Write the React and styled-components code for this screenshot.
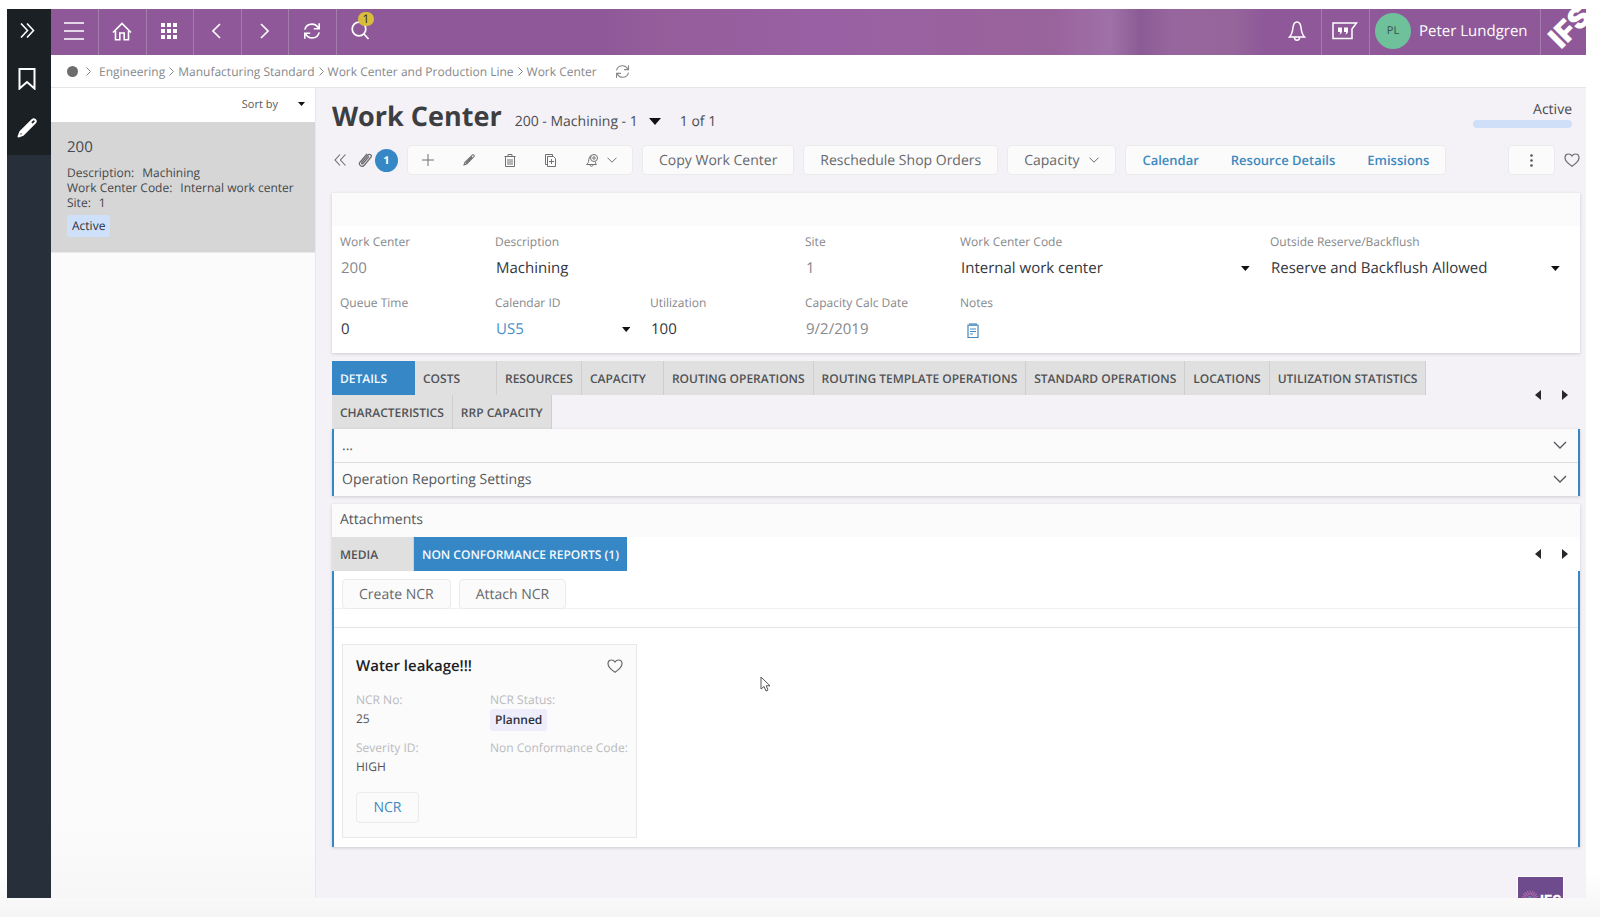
import React from "react";
import styled, { createGlobalStyle, css } from "styled-components";

const c = {
  purple: "#8f5999",
  purpleLine: "#a67bae",
  blue: "#3587c5",
  link: "#3d8abf",
  ink: "#3c3e42",
  text: "#55585c",
  label: "#86888b",
  faint: "#b9babd",
  panel: "#fbfbfb",
  canvas: "#f4f2f6",
  line: "#ebebed",
};

const GlobalStyle = createGlobalStyle`
  * { box-sizing: border-box; }
  body {
    margin: 0;
    font-family: "Open Sans", "Noto Sans", sans-serif;
    font-size: 12px;
    text-rendering: geometricPrecision;
    color: ${c.text};
    background: #fff;
  }
  button, select, input { font: inherit; color: inherit; text-rendering: inherit; }
  button { cursor: pointer; }
  h1, h2, h3, p, dl, dd, ul, ol { margin: 0; padding: 0; font-weight: inherit; }
  a { text-decoration: none; color: inherit; }
`;

const Page = styled.div`
  display: flex;
  height: 100vh;
  min-height: 880px;
  padding: 9px 14px 19px 7px;
  background: linear-gradient(#fff 95%, #f5f5f5);
`;
const Rail = styled.nav`
  flex: 0 0 44px;
  background: #27303a;
`;
const RailTop = styled.div`
  display: flex;
  flex-direction: column;
  align-items: center;
  gap: 17px;
  height: 146px;
  padding: 5px 4px 0 0;
  background: #1b2024;
`;
const RailButton = styled.button`
  display: flex;
  align-items: center;
  justify-content: center;
  width: 32px;
  height: 32px;
  padding: 0;
  border: 0;
  background: none;
  color: #fff;
`;
const Shell = styled.div`
  flex: 1;
  min-width: 0;
  display: flex;
  flex-direction: column;
`;
const TopBar = styled.header`
  display: flex;
  flex: 0 0 46px;
  overflow: hidden;
  color: #fff;
  background: linear-gradient(90deg, ${c.purple} 36%, #955d9a 40%, #9961a3 50%, #99639c 65%, #a070a8 69%, #8b5b95 71%, #98669e 73%, #96659b 77%, ${c.purple} 79%);
`;
const BarButton = styled.button`
  position: relative;
  display: flex;
  align-items: center;
  justify-content: center;
  width: ${(p) => (p.$wide ? 48 : 47)}px;
  padding: 0 2px 2px 0;
  border: 0;
  border-right: ${(p) => (p.$last ? "0" : `1px solid ${c.purpleLine}`)};
  background: none;
  color: #fff;
`;
const Spacer = styled.div`
  flex: 1;
`;
const SearchCount = styled.span`
  position: absolute;
  top: 3px;
  right: 10px;
  width: 16px;
  height: 14px;
  border-radius: 7px;
  background: #d9bd3a;
  color: #2c2530;
  font-size: 12px;
  line-height: 14px;
`;
const User = styled.button`
  display: flex;
  align-items: center;
  gap: 8px;
  width: 171px;
  padding: 0 0 2px 5px;
  border: 0;
  border-right: 1px solid ${c.purpleLine};
  background: none;
  font-size: 15px;
  color: #fff;
`;
const Avatar = styled.span`
  width: 36px;
  height: 36px;
  border-radius: 50%;
  background: #6fc19c;
  color: #35504a;
  font-size: 11px;
  line-height: 36px;
  text-align: center;
`;
const Brand = styled.div`
  display: flex;
  width: 45px;
  overflow: hidden;
`;

const Crumbs = styled.nav`
  display: flex;
  align-items: center;
  flex: 0 0 33px;
  gap: 4px;
  padding: 0 16px;
  border-bottom: 1px solid #e6e4e8;
  background: #fff;
  color: ${c.label};
  font-size: 12px;
`;
const Home = styled.span`
  display: flex;
  align-items: center;
  gap: 8px;
  margin-right: 4px;
`;
const Dot = styled.span`
  width: 11px;
  height: 11px;
  border-radius: 50%;
  background: #6d6d6d;
`;
const CrumbRefresh = styled.button`
  display: flex;
  margin-left: 14px;
  padding: 0;
  border: 0;
  background: none;
`;

const Body = styled.div`
  display: flex;
  flex: 1;
  min-height: 0;
`;
const ListPanel = styled.aside`
  flex: 0 0 265px;
  border-right: 1px solid #e8e8ec;
  background: linear-gradient(${c.panel} 90%, #f7f7f8);
`;
const SortRow = styled.button`
  display: flex;
  align-items: center;
  justify-content: flex-end;
  gap: 20px;
  width: 100%;
  height: 34px;
  padding: 0 10px 2px;
  border: 0;
  background: #fff;
  font-size: 11px;
`;
const ListItem = styled.article`
  height: 131px;
  padding: 14px 16px;
  border-bottom: 1px solid #e9e9e9;
  background: #d6d6d6;
  color: #44474b;
  line-height: 15px;
`;
const ItemTitle = styled.h2`
  margin-bottom: 7px;
  font-size: 15px;
  line-height: 22px;
`;
const ItemLine = styled.p`
  display: flex;
  gap: 8px;
`;
const Badge = styled.span`
  display: inline-block;
  padding: 0 5px;
  border-radius: 3px;
  background: ${(p) => p.$tone};
  color: #2b3038;
  font-weight: 600;
  line-height: 22px;
`;
const ItemBadge = styled(Badge)`
  margin-top: 5px;
  font-weight: 500;
`;

const Main = styled.main`
  flex: 1;
  min-width: 0;
  display: flex;
  flex-direction: column;
  overflow: hidden;
  padding: 0 6px 0 16px;
  background: ${c.canvas};
`;
const TitleRow = styled.div`
  display: flex;
  align-items: baseline;
  height: 57px;
  padding-top: 8px;
  color: #4b4d51;
  font-size: 14px;
`;
const Title = styled.h1`
  margin-right: 13px;
  color: ${c.ink};
  font-size: 27px;
  font-weight: 700;
  line-height: 40px;
`;
const RecordPicker = styled.button`
  display: flex;
  align-items: center;
  gap: 11px;
  margin-right: 19px;
  padding: 0;
  border: 0;
  background: none;
`;
const Status = styled.div`
  align-self: flex-start;
  width: 99px;
  margin: 4px 8px 0 auto;
  color: #4a4c50;
  text-align: right;
  line-height: 20px;
`;
const StatusBar = styled.div`
  height: 8px;
  border-radius: 4px;
  background: #cfdff7;
`;

const Toolbar = styled.div`
  display: flex;
  align-items: center;
  gap: 9px;
  height: 30px;
  margin-bottom: 18px;
`;
const AttachTools = styled.div`
  display: flex;
  align-items: center;
  gap: 12px;
  width: 66px;
  padding-left: 2px;
`;
const IconButton = styled.button`
  display: flex;
  padding: 0;
  border: 0;
  background: none;
  color: #6a6a6c;
`;
const AttachButton = styled(IconButton)`
  align-items: center;
  gap: 2px;
`;
const Count = styled.span`
  width: 23px;
  height: 23px;
  border-radius: 50%;
  background: ${c.blue};
  color: #fff;
  font-size: 11px;
  font-weight: 700;
  line-height: 23px;
  text-align: center;
`;
const Group = styled.div`
  display: flex;
  height: 30px;
  border: 1px solid ${c.line};
  border-radius: 4px;
  background: ${c.panel};
  overflow: hidden;

  > * + * { border-left: 1px solid ${c.line}; }
`;
const groupItem = css`
  display: flex;
  align-items: center;
  justify-content: center;
  padding: 0;
  border: 0;
  background: none;
`;
const GroupButton = styled.button`
  ${groupItem}
  gap: 9px;
  width: ${(p) => (p.$wide ? 60 : 41)}px;
  padding-right: 2px;
  color: #6f7073;
`;
const GroupLink = styled.a`
  ${groupItem}
  padding: 0 16px;
  color: ${c.link};
  font-size: 13px;
  font-weight: 600;
`;
const Button = styled.button`
  display: flex;
  align-items: center;
  justify-content: center;
  gap: 10px;
  height: 30px;
  padding: 0 16px;
  border: 1px solid ${c.line};
  border-radius: 4px;
  background: ${c.panel};
  color: #66686c;
  font-size: 14px;
`;
const MoreButton = styled(Button)`
  width: 47px;
  margin-left: auto;
`;

const Card = styled.section`
  background: #fff;
  box-shadow: 0 1px 3px rgba(70, 70, 80, 0.22);
`;
const CardBand = styled.div`
  height: 33px;
  padding: 0 8px;
  background: ${c.panel};
`;
const Fields = styled.div`
  display: grid;
  grid-template-columns: repeat(8, 1fr);
  padding: 6px 0 2px 8px;
`;
const Field = styled.div`
  display: flex;
  flex-direction: column;
  grid-column: span ${(p) => p.$span || 1};
  height: ${(p) => (p.$short ? 58 : 61)}px;
  padding-right: 20px;
`;
const FieldLabel = styled.label`
  color: ${c.label};
  line-height: 20px;
`;
const fieldValue = css`
  width: 100%;
  height: 32px;
  padding: 0 1px;
  border: 0;
  outline: 0;
  background: none;
  color: ${(p) => (p.$muted ? "#86888b" : p.$link ? "#4a90c6" : "#33363b")};
  font-size: 15px;
`;
const TextValue = styled.input`
  ${fieldValue}
`;
const SelectWrap = styled.span`
  display: flex;
  align-items: center;
`;
const SelectValue = styled.select`
  ${fieldValue}
  appearance: none;
`;
const NotesButton = styled(IconButton)`
  align-items: center;
  height: 34px;
  padding-left: 7px;
  color: #4488bd;
`;

const TabStrip = styled.div`
  display: flex;
  align-items: center;
  justify-content: space-between;
  margin-top: ${(p) => p.$gap || 0}px;
`;
const Tabs = styled.div`
  display: flex;
  flex-wrap: wrap;
`;
const Tab = styled.button`
  min-width: ${(p) => (p.$active ? 83 : 82)}px;
  height: 34px;
  padding: 0 8px;
  border: 0;
  border-right: ${(p) => (p.$active ? "0" : "1px solid #cfcfd1")};
  background: ${(p) => (p.$active ? c.blue : "#e0e0e0")};
  color: ${(p) => (p.$active ? "#f4faff" : "#505256")};
  font-size: 12px;
  font-weight: 600;
  text-align: left;
  white-space: nowrap;
`;
const Pager = styled.div`
  display: flex;
  flex: 0 0 68px;
  gap: 21px;
  padding-left: 23px;
`;
const Framed = styled.div`
  border: solid ${c.blue};
  border-width: 0 2px;
`;
const FoldCard = styled(Card)`
  margin-bottom: 8px;
`;
const Fold = styled.button`
  display: flex;
  align-items: center;
  justify-content: space-between;
  width: 100%;
  height: ${(p) => (p.$first ? 34 : 33)}px;
  padding: 0 11px 1px 8px;
  border: 0;
  border-bottom: ${(p) => (p.$first ? "1px solid #dcdcde" : "0")};
  background: ${c.panel};
  color: #54585c;
  font-size: 14px;
  font-weight: 500;
`;
const SectionTitle = styled.h2`
  font-size: 14px;
  font-weight: 500;
  line-height: 32px;
`;
const Actions = styled.div`
  display: flex;
  gap: 8px;
  height: 38px;
  margin-bottom: 18px;
  padding: 8px 8px 0;
  border-bottom: 1px solid #f1f1f2;
`;
const CardArea = styled.div`
  position: relative;
  padding: 16px 8px 9px;
  border-top: 1px solid #e4e4e6;
`;
const Report = styled.article`
  width: 295px;
  height: 194px;
  padding: 10px 13px;
  border: 1px solid #e8e8ea;
  background: ${c.panel};
`;
const ReportHead = styled.div`
  display: flex;
  align-items: center;
  justify-content: space-between;
  height: 22px;
  margin-bottom: 14px;
`;
const ReportTitle = styled.h3`
  color: #1d2025;
  font-size: 15px;
  font-weight: 600;
`;
const ReportData = styled.dl`
  display: grid;
  grid-template-columns: 134px 1fr;
  grid-auto-rows: 48px;
  height: 101px;
`;
const Term = styled.dt`
  color: ${c.faint};
  line-height: 18px;
  white-space: nowrap;
`;
const Detail = styled.dd`
  color: #505357;
  line-height: 20px;
`;
const ReportLink = styled.a`
  display: inline-flex;
  align-items: center;
  justify-content: center;
  width: 63px;
  height: 31px;
  border: 1px solid ${c.line};
  border-radius: 4px;
  color: ${c.link};
  font-size: 14px;
  font-weight: 500;
`;
const Pointer = styled.svg`
  position: absolute;
  left: 426px;
  top: 48px;
`;
const FooterLogo = styled.div`
  flex: 0 0 21px;
  width: 45px;
  margin: auto 17px 0 auto;
  overflow: hidden;
  background: #6e4b8c;
  outline: 1px solid #fff;
`;

const Svg = ({ w = 20, h = w, box = `0 0 ${w} ${h}`, sw = 2, children, ...rest }) => (
  <svg width={w} height={h} viewBox={box} fill="none" stroke="currentColor" strokeWidth={sw} aria-hidden="true" {...rest}>
    {children}
  </svg>
);
const Caret = ({ w = 8, h = 5 }) => (
  <Svg w={w} h={h} box="0 0 10 6" sw={0} preserveAspectRatio="none">
    <path d="M0 0H10L5 6Z" fill="#111" />
  </Svg>
);
const SideCaret = ({ right }) => (
  <Svg w={6} h={10} sw={0}>
    <path d={right ? "M0 0L6 5L0 10Z" : "M6 0L0 5L6 10Z"} fill="#26282b" />
  </Svg>
);
const Chevron = ({ w = 10, h = 6, sw = 1 }) => (
  <Svg w={w} h={h} box="0 0 10 6" sw={sw}>
    <path d="M0.5 0.7L5 5.2L9.5 0.7" />
  </Svg>
);
const Heart = () => (
  <Svg w={16} h={14} sw={1.2}>
    <path d="M8 13.2C5.5 11.6 1 8.6 1 4.8C1 2.6 2.5 1 4.5 1C6 1 7.3 1.8 8 3C8.7 1.8 10 1 11.5 1C13.5 1 15 2.6 15 4.8C15 8.6 10.5 11.6 8 13.2Z" />
  </Svg>
);
const Refresh = ({ w = 18, sw = 2 }) => (
  <Svg w={w} box="0 0 20 20" sw={sw}>
    <path d="M2 8.5C3 4.5 6 2.3 10 2.3C13 2.3 15.4 3.8 17 6.5M18 1.5V7.5H12M18 11.5C17 15.5 14 17.7 10 17.7C7 17.7 4.6 16.2 3 13.5M2 18.5V12.5H8" />
  </Svg>
);
const Pencil = ({ w = 20, sw = 2 }) => (
  <Svg w={w} box="0 0 20 20" sw={sw} strokeLinejoin="round">
    <path d="M1.5 18.5L3.2 14L15.500 1.700C16.500 1 17.500 1.300 18.200 2C18.900 2.800 18.900 3.700 18.200 4.500L6 16.800ZM4.500 15.500L15 5" />
  </Svg>
);
const CrumbSep = () => (
  <Svg w={5} h={9} sw={1}>
    <path d="M0.5 0.5L4.5 4.5L0.5 8.5" />
  </Svg>
);

const trail = ["Engineering", "Manufacturing Standard", "Work Center and Production Line", "Work Center"];
const tabNames = [
  "DETAILS", "COSTS", "RESOURCES", "CAPACITY", "ROUTING OPERATIONS", "ROUTING TEMPLATE OPERATIONS",
  "STANDARD OPERATIONS", "LOCATIONS", "UTILIZATION STATISTICS", "CHARACTERISTICS", "RRP CAPACITY",
];

const TextField = ({ id, label, value, ...rest }) => (
  <Field $span={rest.$span} $short={rest.$short}>
    <FieldLabel htmlFor={id}>{label}</FieldLabel>
    <TextValue id={id} defaultValue={value} $muted={rest.$muted} />
  </Field>
);
const SelectField = ({ id, label, value, ...rest }) => (
  <Field $span={rest.$span} $short={rest.$short}>
    <FieldLabel htmlFor={id}>{label}</FieldLabel>
    <SelectWrap>
      <SelectValue id={id} $link={rest.$link}><option>{value}</option></SelectValue>
      <Caret w={9} />
    </SelectWrap>
  </Field>
);
const TabPager = () => (
  <Pager>
    <IconButton aria-label="Previous tab"><SideCaret /></IconButton>
    <IconButton aria-label="Next tab"><SideCaret right /></IconButton>
  </Pager>
);

export default function App() {
  return (
    <Page>
      <GlobalStyle />
      <Rail aria-label="Side tools">
        <RailTop>
          <RailButton aria-label="Expand">
            <Svg w={15} sw={1.6}><path d="M1 0.5L7.5 7.5L1 14.5M7 0.5L13.5 7.5L7 14.5" /></Svg>
          </RailButton>
          <RailButton aria-label="Bookmarks">
            <Svg w={18} h={22}><path d="M1.5 1H16.5V20.5L9 14L1.5 20.5Z" /></Svg>
          </RailButton>
          <RailButton aria-label="Edit page"><Pencil /></RailButton>
        </RailTop>
      </Rail>
      <Shell>
        <TopBar>
          <BarButton $wide aria-label="Menu">
            <Svg w={20} h={18} sw={1.6}><path d="M0 1H20M0 9H20M0 17H20" /></Svg>
          </BarButton>
          <BarButton $wide aria-label="Home">
            <Svg w={20} h={19} sw={1.6}><path d="M1 10.5L10 1.5L19 10.5M3.5 9V17.8H7.8V11H12.2V17.8H16.5V9" /></Svg>
          </BarButton>
          <BarButton aria-label="Apps">
            <Svg w={16} sw={0}>
              {[0, 6, 12].flatMap((y) => [0, 6, 12].map((x) => (
                <rect key={`${x}-${y}`} x={x} y={y} width="4" height="4" fill="#fff" />
              )))}
            </Svg>
          </BarButton>
          <BarButton $wide aria-label="Back"><Svg w={9} h={16} sw={1.6}><path d="M8 1L1 8L8 15" /></Svg></BarButton>
          <BarButton aria-label="Forward"><Svg w={9} h={16} sw={1.6}><path d="M1 1L8 8L1 15" /></Svg></BarButton>
          <BarButton $wide aria-label="Reload"><Refresh w={18} sw={1.8} /></BarButton>
          <BarButton $last aria-label="Search">
            <Svg w={20} h={20} sw={1.7}><circle cx="9" cy="8" r="6.8" /><path d="M14 13L18.5 18" /></Svg>
            <SearchCount>1</SearchCount>
          </BarButton>
          <Spacer />
          <BarButton $wide aria-label="Notifications">
            <Svg w={18} h={20} sw={1.5}>
              <path d="M1.500 16C4 13.500 4.500 11 5 6.500C5.400 3.200 6.800 1 9 1C11.200 1 12.600 3.200 13 6.500C13.500 11 14 13.500 16.500 16ZM6.500 16.500C6.500 20 11.500 20 11.500 16.500" />
            </Svg>
          </BarButton>
          <BarButton $wide aria-label="Messages">
            <Svg w={26} h={18} sw={1.5}>
              <path d="M1 1H24.5L20 7V16.5H1Z" />
              <g fill="#fff" stroke="none">
                <path d="M6 5.500h4v3.500c0 2-1 3-2.500 3.500c.5-1 .6-1.800.6-2.500H6zM12 5.500h4v3.500c0 2-1 3-2.500 3.500c.5-1 .6-1.800.6-2.500H12z" />
              </g>
            </Svg>
          </BarButton>
          <User><Avatar>PL</Avatar>Peter Lundgren</User>
          <Brand>
            <svg width="45" height="46" viewBox="0 0 45 46" role="img" aria-label="IFS">
              <text transform="translate(20 41) rotate(-45)" fill="#fff" fontFamily="Inter, sans-serif" fontSize="29" fontWeight="900">IFS</text>
            </svg>
          </Brand>
        </TopBar>
        <Crumbs aria-label="Breadcrumb">
          <Home><Dot /><CrumbSep /></Home>
          {trail.map((name, i) => (
            <React.Fragment key={name}>
              {i > 0 && <CrumbSep />}
              <a href="#">{name}</a>
            </React.Fragment>
          ))}
          <CrumbRefresh aria-label="Refresh"><Refresh w={15} sw={1.4} /></CrumbRefresh>
        </Crumbs>
        <Body>
          <ListPanel>
            <SortRow>Sort by<Caret w={7} h={4} /></SortRow>
            <ListItem>
              <ItemTitle>200</ItemTitle>
              <ItemLine><span>Description:</span><span>Machining</span></ItemLine>
              <ItemLine><span>Work Center Code:</span><span>Internal work center</span></ItemLine>
              <ItemLine><span>Site:</span><span>1</span></ItemLine>
              <ItemBadge $tone="#cfe0fa">Active</ItemBadge>
            </ListItem>
          </ListPanel>
          <Main>
            <TitleRow>
              <Title>Work Center</Title>
              <RecordPicker>200 - Machining - 1<Caret w={12} h={7} /></RecordPicker>
              <span>1 of 1</span>
              <Status>Active<StatusBar /></Status>
            </TitleRow>
            <Toolbar>
              <AttachTools>
                <IconButton aria-label="Collapse list">
                  <Svg w={12} h={12} sw={1.1}><path d="M6 0.5L1 6L6 11.5M11.5 0.5L6.5 6L11.5 11.5" /></Svg>
                </IconButton>
                <AttachButton aria-label="Attachments, 1">
                  <Svg w={15} h={16} box="0 0 15 16" sw={1.2}>
                    <path d="M11 4.5L5 11.5C4.2 12.4 3 11.4 3.7 10.5L10 3C11.5 1.3 14.3 3.3 13 5.2L6.5 13C4 16 0 13 2 10L9 1.8" />
                  </Svg>
                  <Count>1</Count>
                </AttachButton>
              </AttachTools>
              <Group>
                <GroupButton aria-label="New"><Svg w={12} sw={1}><path d="M6 0V12M0 6H12" /></Svg></GroupButton>
                <GroupButton aria-label="Edit"><Pencil w={12} sw={1.8} /></GroupButton>
                <GroupButton aria-label="Delete">
                  <Svg w={12} h={13} sw={1}><path d="M0.5 2.5H11.5M4 2.5V0.5H8V2.5M1.5 2.5V12.5H10.5V2.5M4 5V11M6 5V11M8 5V11" /></Svg>
                </GroupButton>
                <GroupButton aria-label="Duplicate">
                  <Svg w={12} h={13} sw={1}><path d="M2.5 10.5H0.5V0.5H7.5V2.5M2.5 2.5H8.5L10.5 4.5V12.5H2.5ZM6.5 5V10M4 7.5H9" /></Svg>
                </GroupButton>
                <GroupButton $wide aria-label="Subscribe">
                  <Svg w={12} h={13} sw={1}>
                    <path d="M5 1.500C3 2.500 3 5 2.500 7.500C2.200 9 1.500 9.700 0.500 10.500H10.500C9.800 10 9.500 9 9.300 8M4 10.500C4 13 7 13 7 10.500" />
                    <circle cx="8" cy="4" r="3.5" /><circle cx="8" cy="4" r="1.2" />
                  </Svg>
                  <Chevron />
                </GroupButton>
              </Group>
              <Button>Copy Work Center</Button>
              <Button>Reschedule Shop Orders</Button>
              <Button>Capacity<Chevron /></Button>
              <Group as="nav" aria-label="Related pages">
                <GroupLink href="#">Calendar</GroupLink>
                <GroupLink href="#">Resource Details</GroupLink>
                <GroupLink href="#">Emissions</GroupLink>
              </Group>
              <MoreButton aria-label="More actions">
                <Svg w={3} h={13} sw={0}>
                  <g fill="#555"><circle cx="1.5" cy="1.500" r="1.300" /><circle cx="1.5" cy="6.500" r="1.300" /><circle cx="1.5" cy="11.500" r="1.300" /></g>
                </Svg>
              </MoreButton>
              <IconButton aria-label="Add to favourites"><Heart /></IconButton>
            </Toolbar>

            <Card>
              <CardBand />
              <Fields>
                <TextField id="wc" label="Work Center" value="200" $muted />
                <TextField id="desc" label="Description" value="Machining" $span={2} />
                <TextField id="site" label="Site" value="1" $muted />
                <SelectField id="code" label="Work Center Code" value="Internal work center" $span={2} />
                <SelectField id="outside" label="Outside Reserve/Backflush" value="Reserve and Backflush Allowed" $span={2} />
                <TextField id="queue" label="Queue Time" value="0" $short />
                <SelectField id="calendar" label="Calendar ID" value="US5" $short $link />
                <TextField id="util" label="Utilization" value="100" $short />
                <TextField id="calc" label="Capacity Calc Date" value="9/2/2019" $short $muted />
                <Field $short>
                  <FieldLabel htmlFor="notes">Notes</FieldLabel>
                  <NotesButton id="notes" aria-label="Notes">
                    <Svg w={12} h={15} sw={1.2}><path d="M1 2H11V14.5H1ZM3 0V3M5 0V3M7 0V3M9 0V3M3 6H9M3 8.5H9M3 11H6" /></Svg>
                  </NotesButton>
                </Field>
              </Fields>
            </Card>

            <TabStrip $gap={8}>
              <Tabs role="tablist">
                {tabNames.map((name, i) => (
                  <Tab key={name} role="tab" aria-selected={i === 0} $active={i === 0}>{name}</Tab>
                ))}
              </Tabs>
              <TabPager />
            </TabStrip>
            <FoldCard>
              <Framed>
                <Fold $first>...<Chevron w={14} h={8} /></Fold>
                <Fold>Operation Reporting Settings<Chevron w={14} h={8} /></Fold>
              </Framed>
            </FoldCard>

            <Card>
              <CardBand><SectionTitle>Attachments</SectionTitle></CardBand>
              <TabStrip>
                <Tabs role="tablist">
                  <Tab role="tab" aria-selected={false}>MEDIA</Tab>
                  <Tab role="tab" aria-selected $active>NON CONFORMANCE REPORTS (1)</Tab>
                </Tabs>
                <TabPager />
              </TabStrip>
              <Framed>
                <Actions>
                  <Button>Create NCR</Button>
                  <Button>Attach NCR</Button>
                </Actions>
                <CardArea>
                  <Report>
                    <ReportHead>
                      <ReportTitle>Water leakage!!!</ReportTitle>
                      <IconButton aria-label="Add report to favourites"><Heart /></IconButton>
                    </ReportHead>
                    <ReportData>
                      <div><Term>NCR No:</Term><Detail>25</Detail></div>
                      <div><Term>NCR Status:</Term><Detail><Badge $tone="#eeedfb">Planned</Badge></Detail></div>
                      <div><Term>Severity ID:</Term><Detail>HIGH</Detail></div>
                      <div><Term>Non Conformance Code:</Term><Detail /></div>
                    </ReportData>
                    <ReportLink href="#">NCR</ReportLink>
                  </Report>
                  <Pointer width="11" height="16" viewBox="0 0 11 16" aria-hidden="true">
                    <path d="M1 1V13L4 10.5L6 15L8 14L6.2 9.8H10Z" fill="#fff" stroke="#555" />
                  </Pointer>
                </CardArea>
              </Framed>
            </Card>
            <FooterLogo>
              <svg width="45" height="34" viewBox="0 0 45 34" role="img" aria-label="IFS">
                <g stroke="#b56fae" strokeWidth="1">
                  {Array.from({ length: 20 }, (_, i) => (
                    <path key={i} d="M12 18V13.5" transform={`rotate(${i * 18} 12 22)`} />
                  ))}
                </g>
                <circle cx="12" cy="22" r="3" fill="#7f79b8" />
                <text x="22" y="28" fill="#fff" fontFamily="Inter, sans-serif" fontSize="14" fontWeight="800">IFS</text>
              </svg>
            </FooterLogo>
          </Main>
        </Body>
      </Shell>
    </Page>
  );
}
